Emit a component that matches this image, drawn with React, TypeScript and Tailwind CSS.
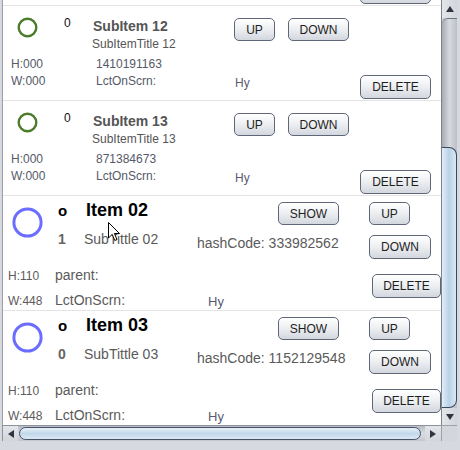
import React, { FC, ReactNode } from "react";

const btnBase =
  "flex items-center justify-center shrink-0 rounded-[5px] border border-[#5f6678] bg-linear-to-b from-[#ffffff] via-[#eceef1] to-[#d3d7de] text-[12px] leading-none text-[#1e1e1e] shadow-[inset_0_1px_0_#ffffff]";

const Btn: FC<{ className: string; children?: ReactNode }> = ({ className, children }) => (
  <div className={`${btnBase} ${className}`}>{children}</div>
);

const Ring: FC<{ size: number; r: number; stroke: string; width: number }> = ({ size, r, stroke, width }) => (
  <svg width={size} height={size} viewBox={`0 0 ${size} ${size}`}>
    <circle cx={size / 2} cy={size / 2} r={r} fill="none" stroke={stroke} strokeWidth={width} />
  </svg>
);

const SubItemRow: FC<{ title: string; sub: string; code: string }> = ({ title, sub, code }) => (
  <div className="h-[95px] border-b border-[#e4e4e4] flex flex-col">
    <div className="h-[46px] flex items-start">
      <div className="w-[61px] pl-[14px] pt-[11px]">
        <Ring size={21} r={8.8} stroke="#4b7b2b" width={2.4} />
      </div>
      <div className="w-[29px] pt-[10px] text-[12px] leading-[14px] text-[#111]">0</div>
      <div className="w-[141px] pt-[12px]">
        <div className="text-[14px] leading-[16px] font-bold text-[#555]">{title}</div>
        <div className="mt-[3px] -ml-px text-[12px] leading-[14px] text-[#555]">{sub}</div>
      </div>
      <div className="pt-[12px] flex gap-[13px]">
        <Btn className="w-[41px] h-[23px]">UP</Btn>
        <Btn className="w-[61px] h-[23px]">DOWN</Btn>
      </div>
    </div>
    <div className="flex items-start text-[#565a68]">
      <div className="w-[93px] pl-[8px] pt-[4px] text-[12px] leading-[17px]">
        <div>H:000</div>
        <div>W:000</div>
      </div>
      <div className="w-[139px] pt-[4px] text-[12px] leading-[17px]">
        <div>{code}</div>
        <div>LctOnScrn:</div>
      </div>
      <div className="w-[125px] pt-[24px] text-[12px] leading-[14px] text-[#5a5a72]">Hy</div>
      <Btn className="mt-[23px] w-[71px] h-[24px]">DELETE</Btn>
    </div>
  </div>
);

const ItemRow: FC<{ title: string; num: string; sub: string; hash: string }> = ({ title, num, sub, hash }) => (
  <div className="h-[115px] border-b border-[#e4e4e4] flex flex-col">
    <div className="h-[64px] flex items-start">
      <div className="w-[55px] pl-[9px] pt-[11px]">
        <Ring size={31} r={13.6} stroke="#6a6dff" width={3} />
      </div>
      <div className="w-[26px] font-bold">
        <div className="pt-[6px] text-[15px] leading-[18px] text-black">o</div>
        <div className="mt-[11px] text-[14px] leading-[16px] text-[#666]">{num}</div>
      </div>
      <div className="w-[113px]">
        <div className="pt-[3px] pl-[2px] text-[18px] leading-[22px] font-bold text-black">{title}</div>
        <div className="mt-[10px] text-[14px] leading-[16px] text-[#5a5a5a]">{sub}</div>
      </div>
      <div className="w-[172px]">
        <Btn className="ml-[81px] mt-[6px] w-[61px] h-[23px]">SHOW</Btn>
        <div className="mt-[10px] text-[14px] leading-[16px] text-[#5a5a5a]">hashCode: {hash}</div>
      </div>
      <div className="flex flex-col items-start">
        <Btn className="mt-[6px] w-[41px] h-[23px]">UP</Btn>
        <Btn className="mt-[10px] w-[62px] h-[24px]">DOWN</Btn>
      </div>
    </div>
    <div className="flex items-start text-[#5a5a5a]">
      <div className="w-[52px] pl-[5px] pt-[5px] text-[12px] leading-[25px] text-[#5e5a5a]">
        <div>H:110</div>
        <div>W:448</div>
      </div>
      <div className="w-[153px] pt-[4px] text-[14px] leading-[25px]">
        <div>parent:</div>
        <div>LctOnScrn:</div>
      </div>
      <div className="w-[164px] pt-[30px] text-[13px] leading-[25px] text-[#5a5a72]">Hy</div>
      <Btn className="mt-[15px] w-[69px] h-[24px]">DELETE</Btn>
    </div>
  </div>
);

const Tri: FC<{ dir: "up" | "down" | "left" | "right" }> = ({ dir }) => {
  const pts = {
    up: "4,0 8,6 0,6",
    down: "0,0 8,0 4,6",
    left: "0,4 6,0 6,8",
    right: "0,0 6,4 0,8",
  }[dir];
  const w = dir === "up" || dir === "down" ? 8 : 6;
  const h = dir === "up" || dir === "down" ? 6 : 8;
  return (
    <svg width={w} height={h} viewBox={`0 0 ${w} ${h}`}>
      <polygon points={pts} fill="#2f3440" />
    </svg>
  );
};

const App: FC = () => {
  return (
    <div className="relative w-[460px] h-[450px] overflow-hidden bg-[#d6d9df] font-['Liberation_Sans',Arial,sans-serif]">
      <div className="flex pl-[2px]">
        {/* viewport */}
        <div className="w-[439px] h-[425px] overflow-hidden border-l border-[#9a9ea6] bg-white">
          {/* bottom edge of the row scrolled above */}
          <div className="h-[6px] overflow-hidden border-b border-[#e4e4e4] flex items-end pl-[357px]">
            <Btn className="mb-px w-[71px] h-[24px]" />
          </div>
          <SubItemRow title="SubItem 12" sub="SubItemTitle 12" code="1410191163" />
          <SubItemRow title="SubItem 13" sub="SubItemTitle 13" code="871384673" />
          <ItemRow title="Item 02" num="1" sub="SubTittle 02" hash="333982562" />
          <ItemRow title="Item 03" num="0" sub="SubTittle 03" hash="1152129548" />
        </div>
        {/* vertical scrollbar */}
        <div className="w-[16px] h-[425px] flex flex-col border-l border-[#7d838e] bg-[#c9ccd2]">
          <div className="h-[18px] flex items-center justify-center bg-linear-to-r from-[#e4e6ea] to-[#d2d5da]">
            <Tri dir="up" />
          </div>
          <div className="flex-1 flex flex-col bg-linear-to-r from-[#a7acb4] via-[#d6d9de] to-[#bcc0c7] rounded-tl-[6px] border-t border-[#6d7380]">
            <div className="mt-[128px] h-[261px] rounded-tr-[8px] rounded-br-[8px] border border-l-0 border-[#3c475b] bg-linear-to-r from-[#e3eef7] via-[#b9d2e7] to-[#dbe8f3]" />
          </div>
          <div className="h-[17px] flex items-center justify-center bg-linear-to-r from-[#e4e6ea] to-[#d2d5da]">
            <Tri dir="down" />
          </div>
        </div>
      </div>
      <div className="flex pl-[2px]">
        {/* horizontal scrollbar */}
        <div className="w-[439px] h-[16px] flex border-t border-l border-[#8d929b] bg-[#c9ccd2]">
          <div className="w-[15px] flex items-center justify-center bg-linear-to-b from-[#e4e6ea] to-[#d2d5da]">
            <Tri dir="left" />
          </div>
          <div className="flex-1 flex bg-linear-to-b from-[#b7bcc4] via-[#d9dce1] to-[#c4c8ce]">
            <div className="ml-px mt-px w-[402px] h-[13px] rounded-l-[7px] rounded-r-[7px] border border-[#46516a] bg-linear-to-b from-[#e7f0f8] via-[#c2d8ea] to-[#dce8f3]" />
          </div>
          <div className="w-[16px] flex items-center justify-center bg-linear-to-b from-[#e4e6ea] to-[#d2d5da]">
            <Tri dir="right" />
          </div>
        </div>
        <div className="w-[16px] h-[16px] border-t border-l border-[#9ca1a9] bg-[#d3d6db]" />
      </div>
      {/* mouse pointer */}
      <svg className="absolute left-[108px] top-[222px]" width="13" height="20" viewBox="0 0 13 20">
        <path d="M0.5,0.5 L0.5,16 L4.2,12.4 L6.8,18.5 L9,17.5 L6.4,11.5 L11.5,11.5 Z" fill="#fff" stroke="#000" strokeWidth="1" strokeLinejoin="round" />
      </svg>
    </div>
  );
};

export default App;
